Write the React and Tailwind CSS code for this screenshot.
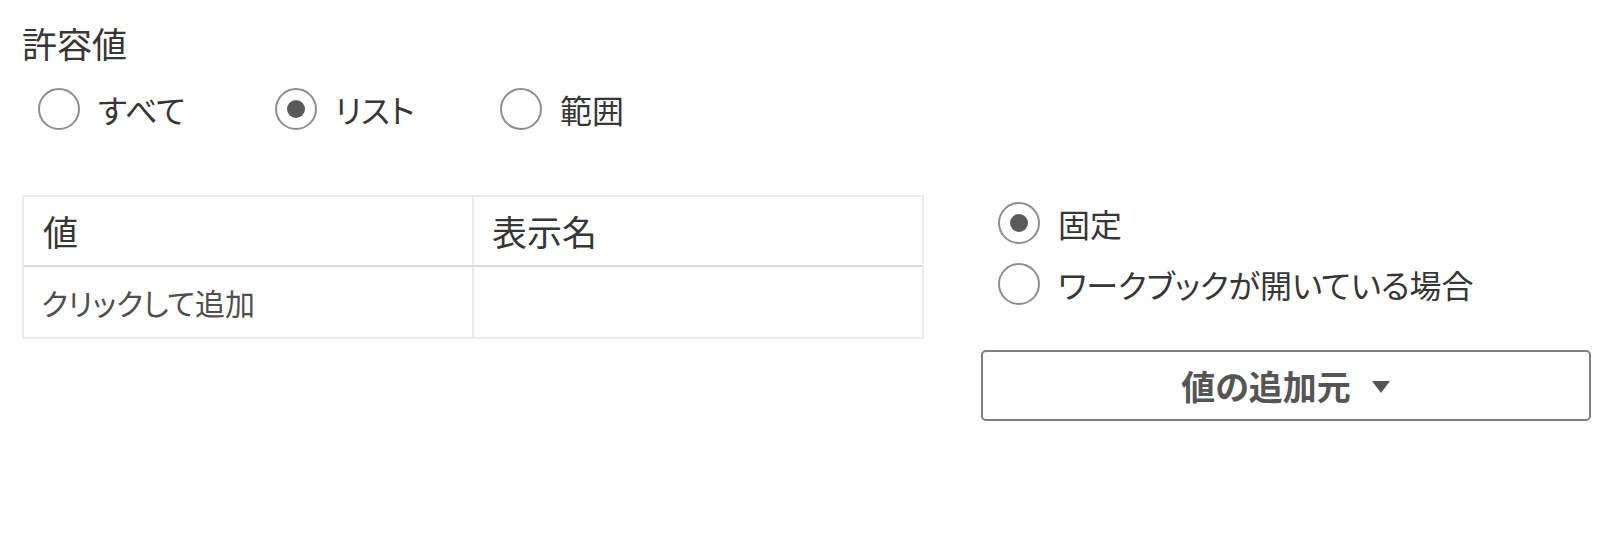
const Radio = ({ checked }) => (
  <span className="flex h-[42px] w-[42px] shrink-0 items-center justify-center rounded-full border-2 border-[#8e8e8e] bg-white">
    {checked && <span className="h-[18px] w-[18px] rounded-full bg-[#5a5a5a]" />}
  </span>
);

const Option = ({ label, checked, className = "" }) => (
  <label className={`flex items-center gap-[18px] ${className}`}>
    <Radio checked={checked} />
    <span className="text-[32px] leading-none text-[#363636]">{label}</span>
  </label>
);

export default function App() {
  return (
    <div className="h-[558px] w-[1598px] overflow-hidden bg-white pt-[25px] pl-[22px] font-['Noto_Sans_CJK_JP','Noto_Sans',sans-serif] [font-feature-settings:'palt']">
      <h2 className="text-[35px] leading-none font-normal text-[#363636]">許容値</h2>

      <div className="mt-[28px] flex items-center pl-[16px]">
        <Option label="すべて" className="w-[237px]" />
        <Option label="リスト" checked className="w-[225px]" />
        <Option label="範囲" />
      </div>

      <div className="mt-[65px] flex items-start">
        <div className="w-[902px] shrink-0 border-2 border-[#ebebeb]">
          <div className="grid h-[70px] grid-cols-[450px_1fr] border-b-2 border-[#d9d9d9]">
            <div className="flex items-center border-r-2 border-[#ebebeb] pl-[19px] text-[35px] text-[#363636]">値</div>
            <div className="flex items-center pl-[18px] text-[35px] text-[#363636]">表示名</div>
          </div>
          <div className="grid h-[70px] grid-cols-[450px_1fr]">
            <div className="flex items-center border-r-2 border-[#ebebeb] pl-[17px] text-[30px] text-[#4f4f4f]">クリックして追加</div>
            <div />
          </div>
        </div>

        <div className="ml-[57px] flex w-[610px] shrink-0 flex-col">
          <div className="mt-[7px] flex flex-col gap-[19px] pl-[17px]">
            <Option label="固定" checked />
            <Option label="ワークブックが開いている場合" />
          </div>
          <button className="mt-[45px] flex h-[71px] w-full items-center justify-center gap-[20px] rounded-[5px] border-2 border-[#7f7f7f] bg-white">
            <span className="text-[34px] leading-none font-bold text-[#555555]">値の追加元</span>
            <svg width="20" height="14" viewBox="0 0 20 14" className="mt-[3px]">
              <path d="M1 1h18L10 13z" fill="#555555" />
            </svg>
          </button>
        </div>
      </div>
    </div>
  );
}
